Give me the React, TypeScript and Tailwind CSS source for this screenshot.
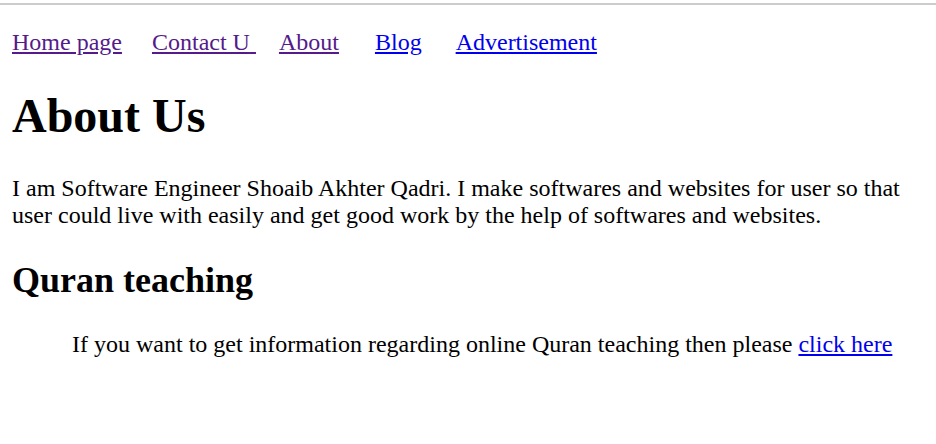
export default function App() {
  return (
    <div className="min-h-screen bg-white text-black font-['Liberation_Serif','Times_New_Roman',serif] text-[24px] leading-[normal]">
      <div className="mt-[3px] h-[2px] bg-[#cccccc]" />
      <main className="px-3 pt-[24px]">
        <nav className="flex">
          <a href="#" className="text-[#551a8b] underline">Home page</a>
          <a href="#" className="ml-[30px] text-[#551a8b] underline">Contact U{'\u00a0'}</a>
          <a href="#" className="ml-[23px] text-[#551a8b] underline">About</a>
          <a href="#" className="ml-[36px] text-[#0000ee] underline">Blog</a>
          <a href="#" className="ml-[34px] text-[#0000ee] underline">Advertisement</a>
        </nav>
        <h1 className="mt-[32px] text-[48px] font-bold">About Us</h1>
        <p className="mt-[32px]">
          I am Software Engineer Shoaib Akhter Qadri. I make softwares and websites for user so that user could live with easily and get good work by the help of softwares and websites.
        </p>
        <h2 className="mt-[30px] text-[36px] font-bold">Quran teaching</h2>
        <blockquote className="mt-[30px] ml-[60px]">
          If you want to get information regarding online Quran teaching then please{' '}
          <a href="#" className="text-[#0000ee] underline">click here</a>
        </blockquote>
      </main>
    </div>
  );
}
